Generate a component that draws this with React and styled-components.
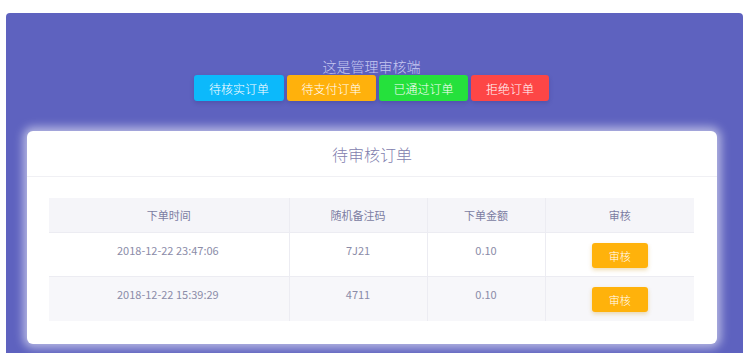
import React from "react";
import styled, { createGlobalStyle } from "styled-components";

const Global = createGlobalStyle`
  html, body { margin: 0; padding: 0; background: #ffffff; }
  body { font-family: "Noto Sans CJK SC", "Noto Sans", sans-serif; overflow: hidden; }
`;

const Panel = styled.div`
  margin: 13px 3px 0 6px;
  height: 340px;
  background: #5e62bf;
  border-radius: 4px 4px 0 0;
  padding: 44px 6px 0 0;
  box-sizing: border-box;
  display: flex;
  flex-direction: column;
  align-items: center;
`;

const Heading = styled.div`
  color: #c6c7f0;
  font-size: 14px;
  font-weight: 300;
  line-height: 18px;
`;

const ButtonRow = styled.div`
  display: flex;
  gap: 3px;
`;

const NavButton = styled.button`
  width: ${(p) => p.$w}px;
  height: 26px;
  padding: 0;
  border: none;
  border-radius: 3px;
  background: ${(p) => p.$bg};
  color: #ffffff;
  font-family: inherit;
  font-size: 12px;
  font-weight: 300;
  box-shadow: 0 2px 4px rgba(40, 40, 110, 0.25);
`;

const Card = styled.div`
  align-self: stretch;
  margin: 30px 20px 0 21px;
  height: 213px;
  background: #ffffff;
  border-radius: 6px;
  box-shadow: 0 0 10px 4px rgba(255, 255, 255, 0.55);
  display: flex;
  flex-direction: column;
`;

const CardTitle = styled.div`
  height: 45px;
  border-bottom: 1px solid #f0f0f4;
  display: flex;
  align-items: center;
  justify-content: center;
  color: #7f80ae;
  font-size: 16px;
  font-weight: 300;
`;

const TableWrap = styled.div`
  padding: 21px 23px 0 22px;
`;

const Table = styled.table`
  width: 100%;
  border-collapse: collapse;
  font-size: 11px;
  color: #8b8ca8;
`;

const Th = styled.th`
  height: 34px;
  padding: 0;
  font-weight: 400;
  color: #7c7da2;
  background: #f5f5f9;
  border-right: 1px solid #ececf2;
  &:last-child { border-right: none; }
`;

const Tr = styled.tr`
  background: ${(p) => (p.$alt ? "#f7f7fa" : "#ffffff")};
  border-top: 1px solid #ececf2;
`;

const Td = styled.td`
  height: 44px;
  padding: 10px 0 0 0;
  box-sizing: border-box;
  vertical-align: top;
  text-align: ${(p) => p.$align || "center"};
  padding-left: ${(p) => p.$pl || "0"};
  line-height: 14px;
  border-right: 1px solid #ececf2;
  &:last-child { border-right: none; }
`;

const ReviewButton = styled.button`
  width: 56px;
  height: 25px;
  border: none;
  border-radius: 3px;
  background: #ffb20b;
  color: #fff;
  font-family: inherit;
  font-size: 11px;
  font-weight: 300;
  box-shadow: 0 2px 4px rgba(200, 140, 0, 0.3);
`;

const navs = [
  { label: "待核实订单", bg: "#0cb9fb", w: 90 },
  { label: "待支付订单", bg: "#ffb10c", w: 89 },
  { label: "已通过订单", bg: "#25e13c", w: 89 },
  { label: "拒绝订单", bg: "#fd4646", w: 78 },
];

const rows = [
  { time: "2018-12-22 23:47:06", code: "7J21", amount: "0.10" },
  { time: "2018-12-22 15:39:29", code: "4711", amount: "0.10" },
];

export default function App() {
  return (
    <>
      <Global />
      <Panel>
        <Heading>这是管理审核端</Heading>
        <ButtonRow>
          {navs.map((n) => (
            <NavButton key={n.label} $bg={n.bg} $w={n.w}>{n.label}</NavButton>
          ))}
        </ButtonRow>
        <Card>
          <CardTitle>待审核订单</CardTitle>
          <TableWrap>
            <Table>
              <colgroup>
                <col style={{ width: "240px" }} />
                <col style={{ width: "138px" }} />
                <col style={{ width: "118px" }} />
                <col style={{ width: "149px" }} />
              </colgroup>
              <thead>
                <tr>
                  <Th>下单时间</Th>
                  <Th>随机备注码</Th>
                  <Th>下单金额</Th>
                  <Th>审核</Th>
                </tr>
              </thead>
              <tbody>
                {rows.map((r, i) => (
                  <Tr key={i} $alt={i % 2 === 1}>
                    <Td $align="left" $pl="68px">{r.time}</Td>
                    <Td>{r.code}</Td>
                    <Td>{r.amount}</Td>
                    <Td><ReviewButton>审核</ReviewButton></Td>
                  </Tr>
                ))}
              </tbody>
            </Table>
          </TableWrap>
        </Card>
      </Panel>
    </>
  );
}
